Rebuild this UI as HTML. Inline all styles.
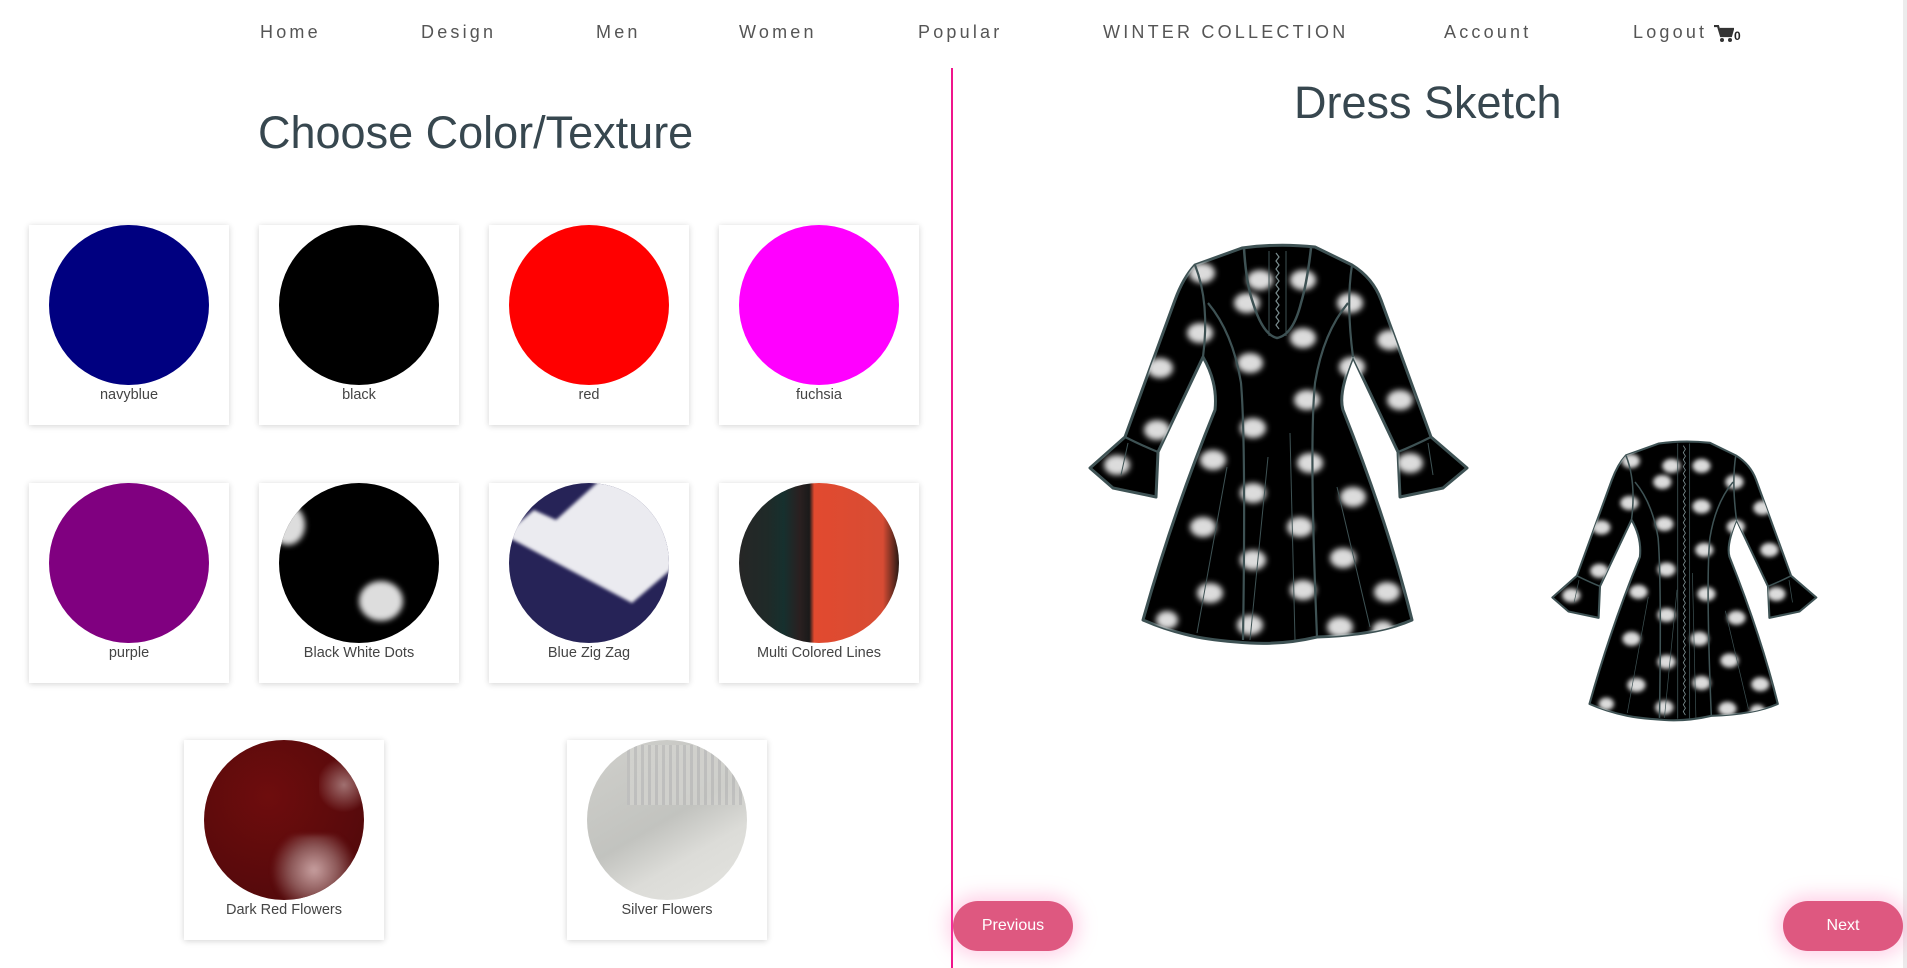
<!DOCTYPE html>
<html><head><meta charset="utf-8"><style>
html,body{margin:0;padding:0;background:#fff;width:1907px;height:968px;overflow:hidden;position:relative;font-family:"Liberation Sans",sans-serif}
.nav a{position:absolute;top:22px;font-size:18px;letter-spacing:3.2px;color:#555;text-decoration:none;font-weight:300;white-space:nowrap}
.vline{position:absolute;left:951px;top:68px;width:2px;height:900px;background:#f0158c}
.scroll{position:absolute;left:1903px;top:0;width:4px;height:968px;background:#ececec}
h1{position:absolute;margin:0;font-weight:400;color:#37474f;font-size:45px;white-space:nowrap}
.card{position:absolute;width:200px;height:200px;background:#fff;box-shadow:0 1px 6px rgba(0,0,0,.18)}
.card .c{position:absolute;left:20px;top:0;width:160px;height:160px;border-radius:50%;overflow:hidden}
.card .l{position:absolute;left:0;right:0;top:162px;text-align:center;font-size:14.5px;color:#444}
.btn{position:absolute;top:901px;height:50px;border-radius:25px;background:#de5880;color:#fff;font-size:16px;text-align:center;line-height:50px;box-shadow:0 0 18px 6px rgba(255,130,190,.35)}
</style></head><body>
<div class="nav">
<a style="left:260px">Home</a><a style="left:421px">Design</a><a style="left:596px">Men</a><a style="left:739px">Women</a><a style="left:918px">Popular</a><a style="left:1103px">WINTER COLLECTION</a><a style="left:1444px">Account</a><a style="left:1633px">Logout</a>
<svg style="position:absolute;left:1714px;top:25px" width="20" height="18" viewBox="0 0 20 18"><path d="M0 1h4l3 10h10l2-7H6" fill="none" stroke="#333" stroke-width="2.2"/><rect x="6" y="4" width="12" height="6" fill="#333"/><circle cx="8" cy="15" r="2" fill="#333"/><circle cx="16" cy="15" r="2" fill="#333"/></svg>
<span style="position:absolute;left:1734px;top:29px;font-size:12px;font-weight:bold;color:#222">0</span>
</div>
<div class="vline"></div><div class="scroll"></div>
<h1 style="left:258px;top:107px">Choose Color/Texture</h1>
<h1 style="left:1294px;top:77px">Dress Sketch</h1>

<div class="card" style="left:29px;top:225px"><div class="c" style="background:#000080"></div><div class="l">navyblue</div></div>
<div class="card" style="left:259px;top:225px"><div class="c" style="background:#000"></div><div class="l">black</div></div>
<div class="card" style="left:489px;top:225px"><div class="c" style="background:#f00"></div><div class="l">red</div></div>
<div class="card" style="left:719px;top:225px"><div class="c" style="background:#f0f"></div><div class="l">fuchsia</div></div>

<div class="card" style="left:29px;top:483px"><div class="c" style="background:#800080"></div><div class="l">purple</div></div>
<div class="card" style="left:259px;top:483px"><div class="c" style="background:#000"><div style="position:absolute;left:-8px;top:22px;width:34px;height:40px;border-radius:50%;background:#ddd;filter:blur(3px)"></div><div style="position:absolute;left:80px;top:98px;width:44px;height:40px;border-radius:50%;background:#ddd;filter:blur(3px)"></div></div><div class="l">Black White Dots</div></div>
<div class="card" style="left:489px;top:483px"><div class="c" style="background:#262357"><svg width="160" height="160"><polygon points="-5,52 25,27 47,37 90,-2 165,-2 165,84 123,120" fill="#ebebf0" style="filter:blur(1.5px)"/></svg></div><div class="l">Blue Zig Zag</div></div>
<div class="card" style="left:719px;top:483px"><div class="c" style="background:linear-gradient(90deg,#262626 0,#1f2a28 18%,#16302e 28%,#2a2020 38%,#1a1a1a 44%,#e24a2f 47%,#d74c34 90%,#2a1a14 100%)"></div><div class="l">Multi Colored Lines</div></div>

<div class="card" style="left:184px;top:740px"><div class="c" style="background:radial-gradient(circle at 40% 35%,#6e0d0d,#5a0a0c 60%,#4a0808);"><div style="position:absolute;left:60px;top:95px;width:100px;height:70px;background:radial-gradient(circle,#c8a0a0 0,#8a5555 40%,transparent 70%);filter:blur(2px)"></div><div style="position:absolute;left:115px;top:15px;width:50px;height:60px;background:radial-gradient(circle,#a07070,transparent 70%)"></div></div><div class="l">Dark Red Flowers</div></div>
<div class="card" style="left:567px;top:740px"><div class="c" style="background:linear-gradient(150deg,#d0d0cc 0,#c2c3bf 50%,#dcdcd8 70%,#e4e4e0 100%)"><div style="position:absolute;left:40px;top:5px;width:120px;height:60px;background:repeating-linear-gradient(90deg,#bbb 0 3px,#d4d4d0 3px 7px);opacity:.7"></div></div><div class="l">Silver Flowers</div></div>

<svg style="position:absolute;left:0;top:0" width="1907" height="968">
<defs>
<filter id="bl"><feGaussianBlur stdDeviation="3"/></filter>
<clipPath id="dc"><path id="ol" d="M154 5Q190 0 227 4L264 22Q285 35 293 57L343 194L379 225L355 245L312 254L310 209L265 114Q250 150 255 167Q300 280 324 377Q290 392 229 394Q195 402 162 400Q130 398 109 394Q80 388 55 377Q85 270 127 167Q130 140 115 114L70 209L68 254L25 245L2 225L37 194L87 57Q95 35 107 22Z"/></clipPath>
<g id="body">
<use href="#ol" fill="#000" stroke="#3e5254" stroke-width="3" stroke-linejoin="round"/>
<g clip-path="url(#dc)" filter="url(#bl)" fill="#dcdcdc">
<ellipse cx="114" cy="30" rx="13" ry="10"/><ellipse cx="172" cy="37" rx="13" ry="10"/><ellipse cx="215" cy="37" rx="13" ry="10"/><ellipse cx="159" cy="60" rx="13" ry="10"/><ellipse cx="262" cy="60" rx="13" ry="10"/><ellipse cx="112" cy="90" rx="13" ry="10"/><ellipse cx="215" cy="95" rx="13" ry="10"/><ellipse cx="302" cy="97" rx="13" ry="10"/><ellipse cx="72" cy="125" rx="13" ry="10"/><ellipse cx="162" cy="120" rx="13" ry="10"/><ellipse cx="264" cy="124" rx="13" ry="10"/><ellipse cx="219" cy="157" rx="13" ry="10"/><ellipse cx="312" cy="157" rx="13" ry="10"/><ellipse cx="69" cy="187" rx="13" ry="10"/><ellipse cx="165" cy="185" rx="13" ry="10"/><ellipse cx="125" cy="217" rx="13" ry="10"/><ellipse cx="222" cy="220" rx="13" ry="10"/><ellipse cx="322" cy="220" rx="13" ry="10"/><ellipse cx="29" cy="222" rx="13" ry="10"/><ellipse cx="165" cy="250" rx="13" ry="10"/><ellipse cx="265" cy="254" rx="13" ry="10"/><ellipse cx="115" cy="284" rx="13" ry="10"/><ellipse cx="212" cy="284" rx="13" ry="10"/><ellipse cx="165" cy="317" rx="13" ry="10"/><ellipse cx="255" cy="315" rx="13" ry="10"/><ellipse cx="122" cy="350" rx="13" ry="10"/><ellipse cx="215" cy="347" rx="13" ry="10"/><ellipse cx="299" cy="349" rx="13" ry="10"/><ellipse cx="162" cy="382" rx="13" ry="10"/><ellipse cx="252" cy="384" rx="13" ry="10"/><ellipse cx="79" cy="377" rx="11" ry="9"/><ellipse cx="295" cy="387" rx="11" ry="9"/>
</g>
<g fill="none" stroke="#3e5254" stroke-width="2.2">
<path d="M107 22Q122 60 115 114"/><path d="M264 22Q258 60 265 114"/>
<path d="M120 60Q145 90 153 140Q158 200 155 397"/>
<path d="M260 60Q235 90 227 140Q221 200 229 394"/>
<path d="M37 194Q55 203 70 209"/><path d="M343 194Q325 203 310 209"/>
<g stroke-width="1"><path d="M202 190L207 397"/><path d="M139 224L109 390"/><path d="M180 214L162 397"/><path d="M249 244L282 384"/><path d="M40 200L33 232"/><path d="M340 200L345 232"/></g>
</g></g>
<g id="front"><use href="#body"/>
<path d="M156 5Q158 40 165 60Q175 92 189 95Q205 92 213 60Q219 40 223 5" fill="none" stroke="#3e5254" stroke-width="2.5"/>
<path d="M181 8V93M198 8V93" stroke="#3e5254" stroke-width="1"/>
<path d="M188 10l3 4-3 4 3 4-3 4 3 4-3 4 3 4-3 4 3 4-3 4 3 4-3 4 3 4-3 4 3 4-3 4 3 4-3 4 3 4" fill="none" stroke="#7a8c8e" stroke-width="1.2"/>
</g>
<g id="back"><use href="#body"/>
<path d="M181 5V398M198 5V398" stroke="#3e5254" stroke-width="1.2"/>
<path d="M189 8l3 5-3 5 3 5-3 5 3 5-3 5 3 5-3 5 3 5-3 5 3 5-3 5 3 5-3 5 3 5-3 5 3 5-3 5 3 5-3 5 3 5-3 5 3 5-3 5 3 5-3 5 3 5-3 5 3 5-3 5 3 5-3 5 3 5-3 5 3 5-3 5 3 5-3 5 3 5-3 5 3 5-3 5 3 5-3 5 3 5-3 5 3 5-3 5 3 5-3 5 3 5-3 5 3 5-3 5 3 5-3 5 3 5-3 5 3 5-3 5 3 5-3 5 3 5-3 5 3 5-3 5 3 5-3 5 3 5-3 5 3 5-3 5 3 5-3 5 3 5-3 5 3 5" fill="none" stroke="#7a8c8e" stroke-width="1.2"/>
</g>
</defs>
<use href="#front" x="1088" y="243"/>
<use href="#back" transform="translate(1551 440) scale(0.7)"/>
</svg>

<div class="btn" style="left:953px;width:120px">Previous</div>
<div class="btn" style="left:1783px;width:120px">Next</div>
</body></html>
